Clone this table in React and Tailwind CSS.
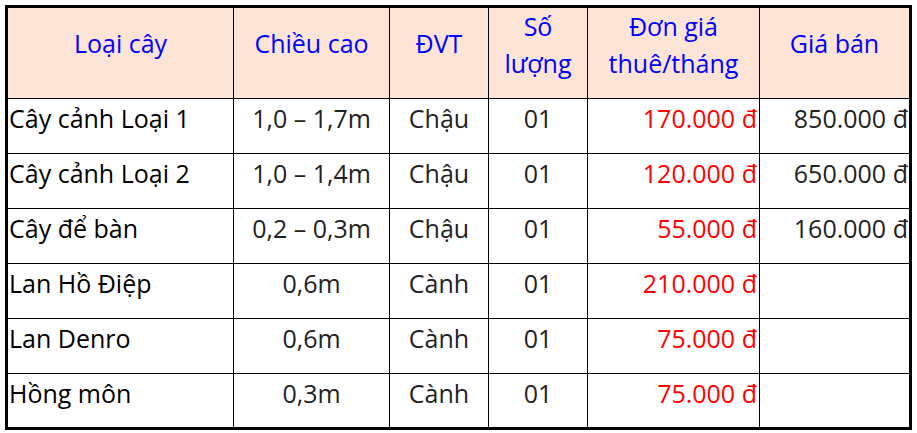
import React from "react";

const rows = [
  ["Cây cảnh Loại 1", "1,0 – 1,7m", "Chậu", "01", "170.000 đ", "850.000 đ"],
  ["Cây cảnh Loại 2", "1,0 – 1,4m", "Chậu", "01", "120.000 đ", "650.000 đ"],
  ["Cây để bàn", "0,2 – 0,3m", "Chậu", "01", "55.000 đ", "160.000 đ"],
  ["Lan Hồ Điệp", "0,6m", "Cành", "01", "210.000 đ", ""],
  ["Lan Denro", "0,6m", "Cành", "01", "75.000 đ", ""],
  ["Hồng môn", "0,3m", "Cành", "01", "75.000 đ", ""],
];

export default function App() {
  return (
    <div className="w-[917px] h-[433px] bg-white pt-[5px] pl-[5px]" style={{ fontFamily: '"Open Sans", "Noto Sans", sans-serif' }}>
      <div className="w-[907px] border-[3px] border-black bg-black">
        <div className="grid grid-cols-[225px_155px_98px_98px_171px_149px] grid-rows-[90px_repeat(5,54px)_53px] gap-px text-[25px]">
          {["Loại cây", "Chiều cao", "ĐVT"].map((h) => (
            <div key={h} className="bg-[#fce4d6] text-[#0000ff] flex items-start justify-center pt-[18px] leading-[34px] whitespace-nowrap">
              {h}
            </div>
          ))}
          <div className="bg-[#fce4d6] text-[#0000ff] flex flex-col items-center justify-start pt-0 leading-[37px] text-center whitespace-nowrap">
            <span>Số</span>
            <span>lượng</span>
          </div>
          <div className="bg-[#fce4d6] text-[#0000ff] flex flex-col items-center justify-start pt-0 leading-[37px] text-center whitespace-nowrap">
            <span>Đơn giá</span>
            <span>thuê/tháng</span>
          </div>
          <div className="bg-[#fce4d6] text-[#0000ff] flex items-start justify-center pt-[18px] leading-[34px] whitespace-nowrap">
            Giá bán
          </div>
          {rows.map((r, i) => (
            <React.Fragment key={i}>
              <div className="bg-white text-black font-medium pl-[1px] pt-[2px] leading-[34px] whitespace-nowrap">{r[0]}</div>
              <div className="bg-white text-[#222] text-center pt-[2px] leading-[34px] whitespace-nowrap">{r[1]}</div>
              <div className="bg-white text-[#222] text-center pt-[2px] leading-[34px] whitespace-nowrap">{r[2]}</div>
              <div className="bg-white text-[#222] text-center pt-[2px] leading-[34px] whitespace-nowrap">{r[3]}</div>
              <div className="bg-white text-[#ff0000] text-right pr-[2px] pt-[2px] leading-[34px] whitespace-nowrap">{r[4]}</div>
              <div className="bg-white text-[#222] text-right pr-[1px] pt-[2px] leading-[34px] whitespace-nowrap">{r[5]}</div>
            </React.Fragment>
          ))}
        </div>
      </div>
    </div>
  );
}
